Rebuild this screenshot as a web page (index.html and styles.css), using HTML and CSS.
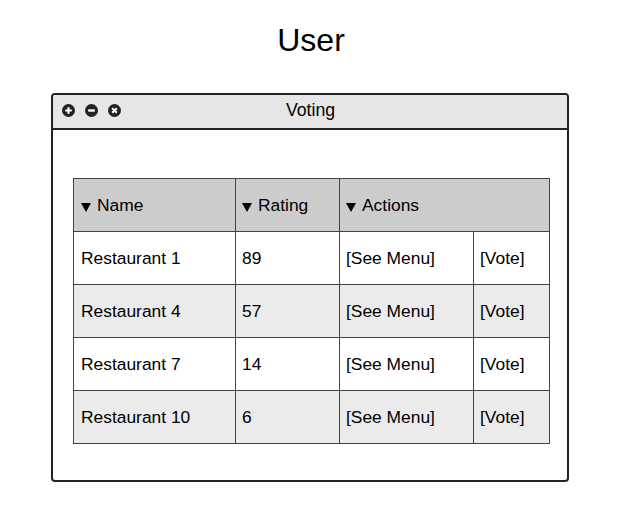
FILE: index.html
```html
<!DOCTYPE html>
<html>
<head>
<meta charset="utf-8">
<link rel="stylesheet" href="styles.css">
</head>
<body>
<h1 class="page-title">User</h1>
<div class="window">
  <div class="titlebar">
    <div class="controls">
      <svg class="ctl" viewBox="0 0 13 13"><circle cx="6.5" cy="6.5" r="6.5" fill="#222"/><path d="M6.5 3.2v6.6M3.2 6.5h6.6" stroke="#fff" stroke-width="2.2"/></svg>
      <svg class="ctl" viewBox="0 0 13 13"><circle cx="6.5" cy="6.5" r="6.5" fill="#222"/><path d="M3.2 6.5h6.6" stroke="#fff" stroke-width="2.4"/></svg>
      <svg class="ctl" viewBox="0 0 13 13"><circle cx="6.5" cy="6.5" r="6.5" fill="#222"/><path d="M4.2 4.2l4.6 4.6M8.8 4.2l-4.6 4.6" stroke="#fff" stroke-width="2"/></svg>
    </div>
    <div class="win-title">Voting</div>
  </div>
  <div class="content">
    <table class="grid">
      <colgroup>
        <col class="c1"><col class="c2"><col class="c3"><col class="c4">
      </colgroup>
      <thead>
        <tr>
          <th><svg class="arrow" viewBox="0 0 10 9"><polygon points="0,0 10,0 5,9" fill="#000"/></svg>Name</th>
          <th><svg class="arrow" viewBox="0 0 10 9"><polygon points="0,0 10,0 5,9" fill="#000"/></svg>Rating</th>
          <th colspan="2"><svg class="arrow" viewBox="0 0 10 9"><polygon points="0,0 10,0 5,9" fill="#000"/></svg>Actions</th>
        </tr>
      </thead>
      <tbody>
        <tr><td>Restaurant 1</td><td>89</td><td>[See Menu]</td><td>[Vote]</td></tr>
        <tr class="alt"><td>Restaurant 4</td><td>57</td><td>[See Menu]</td><td>[Vote]</td></tr>
        <tr><td>Restaurant 7</td><td>14</td><td>[See Menu]</td><td>[Vote]</td></tr>
        <tr class="alt"><td>Restaurant 10</td><td>6</td><td>[See Menu]</td><td>[Vote]</td></tr>
      </tbody>
    </table>
  </div>
</div>
</body>
</html>
```
FILE: styles.css
```css
html, body {
  margin: 0;
  padding: 0;
  background: #fff;
  font-family: "Liberation Sans", Arial, sans-serif;
  color: #000;
}
body {
  width: 618px;
  height: 529px;
  overflow: hidden;
}
.page-title {
  margin: 0;
  padding-top: 22px;
  height: 93px;
  box-sizing: border-box;
  text-align: center;
  font-weight: normal;
  font-size: 32px;
  line-height: 37px;
  padding-left: 4px;
}
.window {
  margin-left: 51px;
  width: 518px;
  height: 389px;
  box-sizing: border-box;
  border: 2px solid #222;
  border-radius: 4px;
  display: flex;
  flex-direction: column;
}
.titlebar {
  height: 35px;
  box-sizing: border-box;
  background: #e6e6e6;
  border-bottom: 2px solid #222;
  border-radius: 2px 2px 0 0;
  position: relative;
  display: flex;
  align-items: center;
}
.controls {
  display: flex;
  gap: 10px;
  padding-left: 9px;
  align-items: center;
  position: relative;
  top: -1px;
}
.ctl {
  width: 13px;
  height: 13px;
  display: block;
}
.win-title {
  position: absolute;
  left: 0;
  right: 0;
  top: 0;
  bottom: 0;
  text-align: center;
  font-size: 17.7px;
  line-height: 31px;
  padding-left: 1px;
}
.content {
  padding: 48px 0 0 20px;
}
.grid {
  border-collapse: collapse;
  table-layout: fixed;
  width: 476px;
  font-size: 17.4px;
}
.c1 { width: 162px; }
.c2 { width: 104px; }
.c3 { width: 134px; }
.c4 { width: 76px; }
.grid th, .grid td {
  border: 1px solid #444;
  height: 53px;
  padding: 0 0 0 6px;
  text-align: left;
  font-weight: normal;
  box-sizing: border-box;
  white-space: nowrap;
}
.grid th:first-child, .grid td:first-child {
  padding-left: 7px;
}
.grid th {
  background: #cccccc;
}
.arrow {
  width: 10px;
  height: 9px;
  margin-right: 6px;
  vertical-align: -1px;
}
.grid tr.alt td {
  background: #ebebeb;
}
```
